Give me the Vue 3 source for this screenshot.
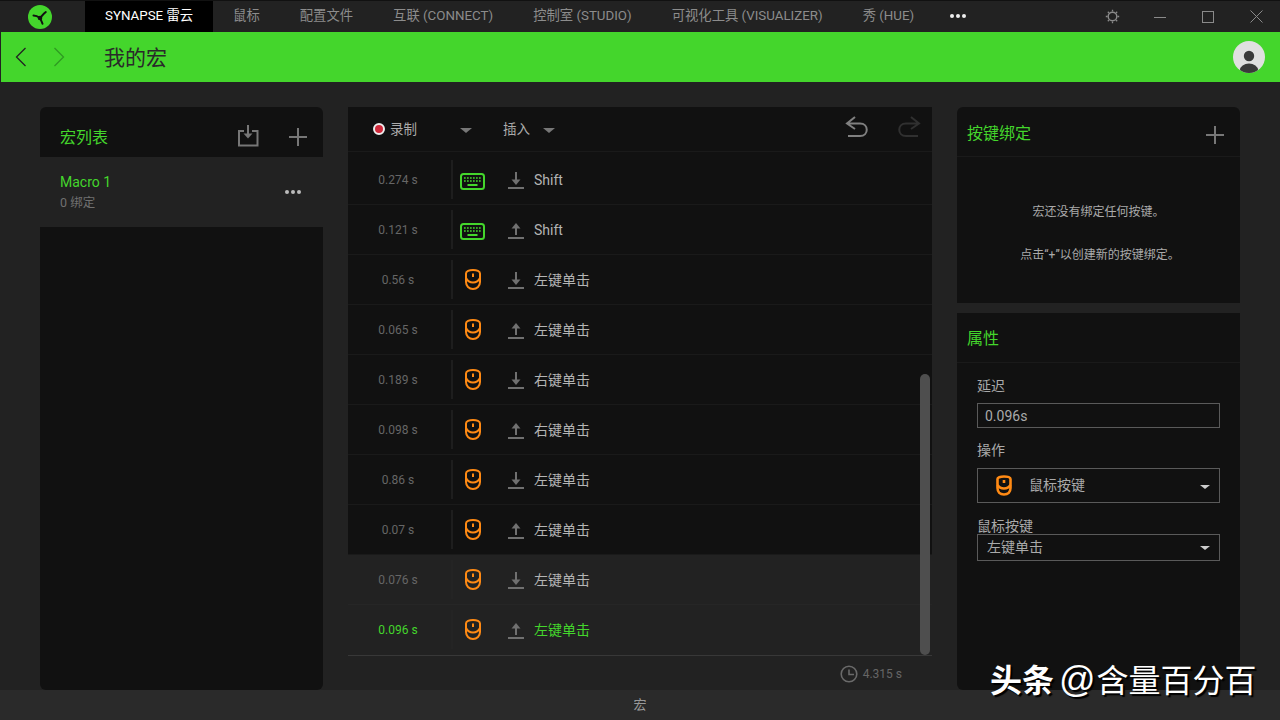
<template>
  <div class="app">
    <!-- title bar -->
    <div class="titlebar">
      <div class="logo">
        <svg width="24" height="24" viewBox="0 0 24 24">
          <circle cx="12" cy="12" r="12" fill="#44d62c" />
          <path d="M5.500 10.500C8 10.500 10 11.500 12 13M12 13C13.500 11.500 15 9 17.800 7M12 13C12.800 14.800 13.800 16.500 14.500 18.800" fill="none" stroke="#111" stroke-width="2" stroke-linecap="round" />
          <circle cx="12" cy="13" r="2.300" fill="#111" />
        </svg>
      </div>
      <div
        v-for="(tab, i) in tabs"
        :key="tab"
        :class="['tab', { 'tab--active': i === 0 }]"
      >{{ tab }}</div>
      <div class="tab-more"><i></i><i></i><i></i></div>
      <div class="win-btns">
        <span class="win-btn">
          <svg width="15" height="15" viewBox="0 0 15 15" fill="none" stroke="#8a8a8a">
            <circle cx="7.500" cy="7.500" r="4.300" stroke-width="1.400" />
            <path d="M7.500 0.800V2.600M7.500 12.400V14.200M0.800 7.500H2.600M12.400 7.500H14.200M2.800 2.800L4.100 4.100M10.900 10.900L12.200 12.200M2.800 12.200L4.100 10.900M10.900 4.100L12.200 2.800" stroke-width="1.300" />
          </svg>
        </span>
        <span class="win-btn">
          <svg width="12" height="12" viewBox="0 0 12 12" stroke="#8a8a8a"><path d="M0 6.500H12" /></svg>
        </span>
        <span class="win-btn">
          <svg width="12" height="12" viewBox="0 0 12 12" stroke="#8a8a8a" fill="none"><rect x="0.500" y="0.500" width="11" height="11" /></svg>
        </span>
        <span class="win-btn">
          <svg width="13" height="13" viewBox="0 0 13 13" stroke="#8a8a8a" fill="none"><path d="M0.500 0.500L12.500 12.500M12.500 0.500L0.500 12.500" /></svg>
        </span>
      </div>
    </div>

    <!-- green header -->
    <div class="greenbar">
      <svg class="nav-arrow" width="12" height="20" viewBox="0 0 12 20" fill="none" stroke="#222" stroke-width="1.300"><path d="M10.500 1L1.500 10L10.500 19" /></svg>
      <svg class="nav-arrow nav-arrow--off" width="12" height="20" viewBox="0 0 12 20" fill="none" stroke="#2f9a22" stroke-width="1.300"><path d="M1.500 1L10.500 10L1.500 19" /></svg>
      <span class="page-title">我的宏</span>
      <svg class="avatar" width="32" height="32" viewBox="0 0 32 32">
        <defs><clipPath id="av"><circle cx="16" cy="16" r="16" /></clipPath></defs>
        <circle cx="16" cy="16" r="16" fill="#e0e0e0" />
        <g clip-path="url(#av)" fill="#3a3a3a">
          <circle cx="16" cy="15" r="5.200" />
          <ellipse cx="16" cy="29" rx="9" ry="6.500" />
        </g>
      </svg>
    </div>

    <div class="main">
      <!-- macro list -->
      <div class="panel panel--left">
        <div class="panel-head panel-head--list">
          <span class="panel-title">宏列表</span>
          <svg class="import-icon" width="22" height="22" viewBox="0 0 22 22" fill="none" stroke="#777" stroke-width="2">
            <path d="M7 6H2V20.500H20.500V6H15" />
            <path d="M11 0V9" />
            <path d="M6.500 8.500H15.500L11 13.500Z" fill="#777" stroke="none" />
          </svg>
          <svg class="plus" width="18" height="18" viewBox="0 0 18 18" stroke="#777" stroke-width="2"><path d="M9 0V18M0 9H18" /></svg>
        </div>
        <div class="macro-item">
          <div>
            <div class="macro-name">Macro 1</div>
            <div class="macro-sub">0 绑定</div>
          </div>
          <div class="dots"><i></i><i></i><i></i></div>
        </div>
      </div>

      <!-- event list -->
      <div class="panel panel--mid">
        <div class="toolbar">
          <span class="rec-dot"></span>
          <span class="tool-label">录制</span>
          <span class="caret caret--rec"></span>
          <span class="tool-label tool-label--insert">插入</span>
          <span class="caret caret--insert"></span>
          <svg class="undo" width="24" height="22" viewBox="0 0 24 22" fill="none" stroke="#808080" stroke-width="2">
            <path d="M10 1L2 7.500L10 13M2 7.500H15C24 7.500 24 20 15 20H3" />
          </svg>
          <svg class="redo" width="24" height="22" viewBox="0 0 24 22" fill="none" stroke="#303030" stroke-width="2">
            <path d="M14 1L22 7.500L14 13M22 7.500H9C0 7.500 0 20 9 20H21" />
          </svg>
        </div>
        <div class="rows">
          <div
            v-for="(row, i) in rows"
            :key="i"
            :class="['row', { 'row--sel': i >= 8, 'row--cur': i === 9, 'row--kb': row.kb }]"
          >
            <span class="row-time">{{ row.time }}</span>
            <span class="row-sep"></span>
            <span class="row-device">
              <svg v-if="row.kb" class="kb" width="25" height="17" viewBox="0 0 25 17" fill="none">
                <rect x="1" y="1" width="23" height="15" rx="2.500" stroke="#44d62c" stroke-width="2" />
                <path d="M4 5H21M4 8H21" stroke="#44d62c" stroke-width="1.500" stroke-dasharray="1.700 1.300" />
                <path d="M7.500 12H17.500" stroke="#44d62c" stroke-width="2" />
              </svg>
              <svg v-else class="mouse" width="16" height="21" viewBox="0 0 16 21" fill="none" stroke="#ff8a14" stroke-width="2">
                <path d="M1 4.500C1 2.500 4 1 8 1S15 2.500 15 4.500V13C15 17 12 20 8 20S1 17 1 13Z" />
                <path d="M1 9C2.500 12 5 13.500 8 13.500S13.500 12 15 9" />
                <path d="M8 4.500V8" />
              </svg>
            </span>
            <svg class="row-arrow" width="16" height="17" viewBox="0 0 16 17" stroke="#707070" fill="none" stroke-width="2">
              <path d="M0 16H16" />
              <template v-if="row.up">
                <path d="M8 13V3" />
                <path d="M3.500 6.500L8 1L12.500 6.500Z" fill="#707070" stroke="none" />
              </template>
              <template v-else>
                <path d="M8 0V10" />
                <path d="M3.500 7.500L8 13L12.500 7.500Z" fill="#707070" stroke="none" />
              </template>
            </svg>
            <span class="row-label">{{ row.label }}</span>
          </div>
          <div class="scrollthumb"></div>
        </div>
        <div class="mid-foot">
          <svg width="18" height="18" viewBox="0 0 18 18" fill="none" stroke="#6a6a6a" stroke-width="1.600">
            <circle cx="9" cy="9" r="7.800" />
            <path d="M9 4.500V9.500H14" />
          </svg>
          <span>4.315 s</span>
        </div>
      </div>

      <!-- bindings + properties -->
      <div class="side">
        <div class="panel panel--bind">
          <div class="panel-head panel-head--side">
            <span class="panel-title">按键绑定</span>
            <svg class="plus" width="18" height="18" viewBox="0 0 18 18" stroke="#777" stroke-width="2"><path d="M9 0V18M0 9H18" /></svg>
          </div>
          <p class="bind-msg bind-msg--first">宏还没有绑定任何按键。</p>
          <p class="bind-msg bind-msg--second">点击“+”以创建新的按键绑定。</p>
        </div>
        <div class="panel panel--props">
          <div class="panel-head panel-head--side panel-head--props">
            <span class="panel-title">属性</span>
          </div>
          <div class="props-body">
            <div class="field-label">延迟</div>
            <div class="input">0.096s</div>
            <div class="field-label field-label--op">操作</div>
            <div class="select select--op">
              <svg width="16" height="21" viewBox="0 0 16 21" fill="none" stroke="#ff8a14" stroke-width="2.600">
                <path d="M1.500 4C1.500 2.500 4 1.500 8 1.500S14.500 2.500 14.500 4V13C14.500 17 12 19.500 8 19.500S1.500 17 1.500 13Z" />
                <path d="M1.500 10C3 12.500 5 13.500 8 13.500S13 12.500 14.500 10" />
                <path d="M8 5V8" />
              </svg>
              <span class="select-text">鼠标按键</span>
              <span class="caret caret--small"></span>
            </div>
            <div class="field-label field-label--btn">鼠标按键</div>
            <div class="select select--btn">
              <span>左键单击</span>
              <span class="caret caret--small"></span>
            </div>
          </div>
        </div>
      </div>
    </div>

    <div class="footer">宏</div>
    <div class="watermark"><b>头条</b> <span class="at">@</span>含量百分百</div>
  </div>
</template>

<script setup>
const tabs = [
  'SYNAPSE 雷云',
  '鼠标',
  '配置文件',
  '互联 (CONNECT)',
  '控制室 (STUDIO)',
  '可视化工具 (VISUALIZER)',
  '秀 (HUE)',
]

const rows = [
  { time: '0.274 s', kb: true, up: false, label: 'Shift' },
  { time: '0.121 s', kb: true, up: true, label: 'Shift' },
  { time: '0.56 s', kb: false, up: false, label: '左键单击' },
  { time: '0.065 s', kb: false, up: true, label: '左键单击' },
  { time: '0.189 s', kb: false, up: false, label: '右键单击' },
  { time: '0.098 s', kb: false, up: true, label: '右键单击' },
  { time: '0.86 s', kb: false, up: false, label: '左键单击' },
  { time: '0.07 s', kb: false, up: true, label: '左键单击' },
  { time: '0.076 s', kb: false, up: false, label: '左键单击' },
  { time: '0.096 s', kb: false, up: true, label: '左键单击' },
]
</script>

<style>
html, body {
  margin: 0;
  background: #222;
}
</style>

<style scoped>
.app {
  position: relative;
  width: 1280px;
  height: 720px;
  overflow: hidden;
  display: flex;
  flex-direction: column;
  background: #222;
  font-family: Roboto, "Noto Sans CJK SC", sans-serif;
  color: #bbb;
}

/* Title bar */
.titlebar {
  height: 31px;
  border-top: 1px solid #111;
  display: flex;
  align-items: stretch;
  font-size: 13.330px;
  color: #8c8c8c;
}
.logo {
  width: 85px;
  padding-left: 28px;
  box-sizing: border-box;
  display: flex;
  align-items: center;
}
.tab {
  padding: 0 20px;
  line-height: 30px;
  white-space: nowrap;
}
.tab--active {
  background: #000;
  color: #fff;
}
.tab-more {
  display: flex;
  align-items: center;
  gap: 2px;
  margin-left: 16px;
  margin-top: -1px;
}
.tab-more i {
  width: 4px;
  height: 4px;
  border-radius: 50%;
  background: #eee;
}
.win-btns {
  display: flex;
  margin-left: auto;
}
.win-btn {
  width: 48px;
  display: flex;
  align-items: center;
  justify-content: center;
}

/* Green bar */
.greenbar {
  height: 50px;
  margin-left: 1px;
  background: #44d62c;
  display: flex;
  align-items: center;
  padding-left: 14px;
  padding-right: 15px;
}
.nav-arrow--off {
  margin-left: 26px;
}
.page-title {
  margin-left: 39px;
  margin-top: -2px;
  font-size: 21px;
  color: #2a2a2a;
}
.avatar {
  margin-left: auto;
}

/* Main */
.main {
  flex: 1;
  min-height: 0;
  display: flex;
  gap: 25px;
  padding: 25px 40px 0;
}
.panel {
  background: #111;
  border-radius: 6px;
  overflow: hidden;
}
.panel--left {
  width: 283px;
}
.panel--mid {
  width: 584px;
  display: flex;
  flex-direction: column;
  border-radius: 0;
}
.side {
  width: 283px;
  display: flex;
  flex-direction: column;
  gap: 10px;
}
.panel-head {
  height: 49px;
  display: flex;
  align-items: center;
  box-sizing: border-box;
}
.panel-title {
  color: #44d62c;
  font-size: 16px;
}
.panel-head--list {
  padding: 8px 16px 0 20px;
}
.panel-head--list .plus {
  margin-top: 2px;
}
.import-icon {
  margin-left: auto;
  margin-right: 30px;
}
.panel-head--side {
  padding: 1px 16px 0 10px;
  justify-content: space-between;
  border-bottom: 1px solid #1a1a1a;
  height: 50px;
}
.panel-head--side .plus {
  margin-top: 6px;
}
.panel-head--props {
  padding-top: 0;
  padding-bottom: 2px;
}

.macro-item {
  height: 70px;
  margin-top: 1px;
  background: #222;
  display: flex;
  align-items: center;
  justify-content: space-between;
  padding: 0 22px 0 20px;
}
.macro-name {
  color: #44d62c;
  font-size: 14px;
  line-height: 20px;
}
.macro-sub {
  color: #707070;
  font-size: 12.500px;
  line-height: 20px;
  margin-top: 1px;
}
.dots {
  display: flex;
  gap: 2px;
}
.dots i {
  width: 4px;
  height: 4px;
  border-radius: 50%;
  background: #bbb;
}

/* Toolbar */
.toolbar {
  height: 44px;
  border-bottom: 1px solid #1a1a1a;
  display: flex;
  align-items: center;
  padding: 0 11px 0 25px;
}
.rec-dot {
  width: 8px;
  height: 8px;
  border-radius: 50%;
  background: #d0293b;
  border: 2px solid #eee;
}
.tool-label {
  font-size: 13.500px;
  color: #aaa;
  margin-left: 5px;
  margin-top: -3px;
}
.tool-label--insert {
  margin-left: 31px;
}
.caret {
  width: 0;
  height: 0;
  border-left: 6px solid transparent;
  border-right: 6px solid transparent;
  border-top: 5px solid #777;
}
.caret--rec {
  margin-left: 43px;
  margin-top: 3px;
}
.caret--insert {
  margin-left: 13px;
  margin-top: 3px;
}
.caret--small {
  margin-left: auto;
  border-left-width: 5px;
  border-right-width: 5px;
  border-top: 4px solid #ccc;
  margin-top: 3px;
}
.undo {
  margin-left: auto;
  margin-top: -4px;
}
.redo {
  margin-left: 28px;
  margin-top: -4px;
}

/* Rows */
.rows {
  position: relative;
  margin-top: 3px;
}
.row {
  height: 50px;
  box-sizing: border-box;
  border-bottom: 1px solid #1a1a1a;
  display: flex;
  align-items: center;
}
.row--sel {
  background: #222;
  border-bottom-color: #262626;
}
.row--cur {
  border-bottom-color: #222;
}
.row-time {
  width: 100px;
  text-align: center;
  font-size: 12px;
  color: #666;
}
.row-sep {
  width: 2px;
  height: 39px;
  margin-left: 3px;
  background: #1e1e1e;
}
.row--sel .row-sep {
  background: #242424;
}
.row-device {
  width: 43px;
  display: flex;
  align-items: center;
  padding-left: 7px;
  box-sizing: border-box;
  flex: none;
}
.kb {
  margin-top: 3px;
}
.mouse {
  margin-left: 5px;
}
.row-arrow {
  margin-left: 12px;
  margin-top: 1px;
}
.row-label {
  margin-left: 10px;
  margin-top: -2px;
  font-size: 14px;
  color: #b4b4b4;
}
.row--kb .row-label {
  margin-top: 0;
}
.row--cur .row-time,
.row--cur .row-label {
  color: #44d62c;
}
.scrollthumb {
  position: absolute;
  right: 2px;
  top: 219px;
  width: 10px;
  height: 281px;
  border-radius: 5px;
  background: #4e4e4e;
}
.mid-foot {
  flex: 1;
  background: #222;
  border-top: 1px solid #383838;
  display: flex;
  align-items: center;
  justify-content: flex-end;
  gap: 5px;
  padding-right: 30px;
  padding-top: 2px;
  font-size: 12px;
  color: #666;
}

/* Right panels */
.panel--bind {
  height: 196px;
  border-radius: 6px 6px 0 0;
}
.bind-msg {
  margin: 0;
  text-align: center;
  font-size: 12px;
  line-height: 16px;
  color: #aaa;
}
.bind-msg--first {
  margin-top: 47px;
}
.bind-msg--second {
  margin-top: 27px;
  padding-left: 3px;
}
.panel--props {
  flex: 1;
  border-radius: 0 0 6px 6px;
}
.props-body {
  padding: 13px 20px 0;
}
.field-label {
  font-size: 14px;
  line-height: 20px;
  color: #aaa;
}
.input {
  margin-top: 7px;
  height: 23px;
  line-height: 24px;
  border: 1px solid #5a5a5a;
  padding-left: 7px;
  font-size: 14px;
  color: #aaa;
}
.field-label--op {
  margin-top: 12px;
}
.select {
  display: flex;
  align-items: center;
  box-sizing: border-box;
  border: 1px solid #5a5a5a;
  font-size: 14px;
  color: #aaa;
  padding-right: 9px;
}
.select--op {
  margin-top: 8px;
  height: 35px;
  padding-left: 18px;
}
.select-text {
  margin-left: 17px;
  margin-top: -3px;
}
.field-label--btn {
  margin-top: 14px;
  line-height: 18px;
}
.select--btn {
  height: 27px;
  margin-top: -1px;
  padding-left: 9px;
  padding-bottom: 4px;
}
.select--btn .caret--small {
  margin-top: 5px;
}

.footer {
  height: 30px;
  background: #2a2a2a;
  text-align: center;
  line-height: 30px;
  font-size: 13px;
  color: #999;
}

/* Watermark drawn over the screenshot */
.watermark {
  position: absolute;
  left: 990px;
  top: 658px;
  font-size: 32px;
  line-height: 44px;
  color: #fff;
  white-space: nowrap;
  text-shadow: 2px 2px 1px #000;
}
.watermark b {
  font-weight: 700;
}
.at {
  font-size: 36px;
  font-family: "Liberation Sans", sans-serif;
  margin-left: -3px;
  margin-right: 1px;
}
</style>
